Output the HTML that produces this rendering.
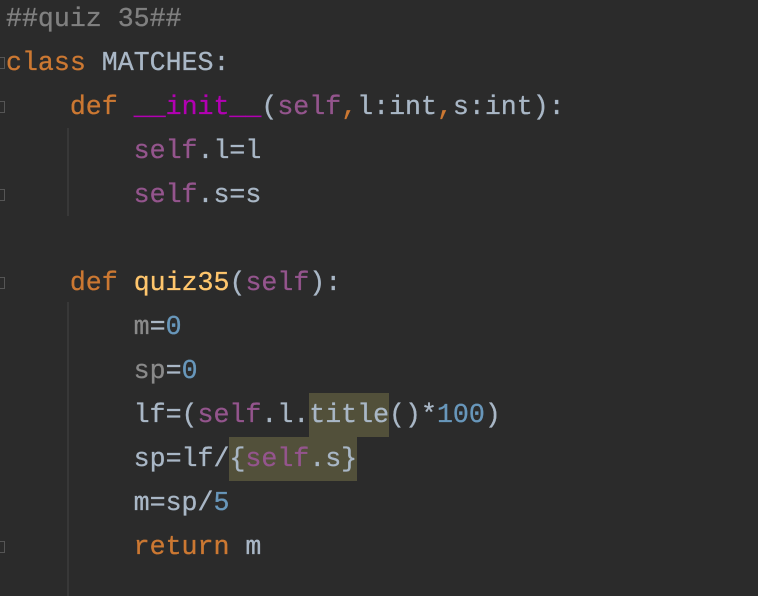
<!DOCTYPE html>
<html><head><style>
html,body{margin:0;padding:0;background:#2b2b2b;width:758px;height:596px;overflow:hidden}
.c{position:absolute;left:6px;top:-3px;font-family:"Liberation Mono",monospace;font-size:26.6px;line-height:44px;color:#a9b7c6;white-space:pre;-webkit-text-stroke:0.3px}
.k{color:#cc7832}.s{color:#94558d}.m{color:#b200b2}.n{color:#6897bb}.g{color:#808080}.u{color:#8a8a8a}.f{color:#ffc66d}
.h{background:#52503a;display:inline-block;height:44px;vertical-align:top}
.ig{position:absolute;left:67px;width:2px;background:#383838}
.fm{position:absolute;left:0;width:5px;height:12px;border:1px solid #555;border-left:none;box-sizing:border-box}
</style></head><body>
<div class="ig" style="top:128px;height:88px"></div>
<div class="ig" style="top:302px;height:294px"></div>
<div class="fm" style="top:57px"></div>
<div class="fm" style="top:101px"></div>
<div class="fm" style="top:189px"></div>
<div class="fm" style="top:277px"></div>
<div class="fm" style="top:541px"></div>
<div class="c"><span class="g">##quiz 35##</span>
<span class="k">class</span> MATCHES:
    <span class="k">def</span> <span class="m">__init__</span>(<span class="s">self</span><span class="k">,</span>l:int<span class="k">,</span>s:int):
        <span class="s">self</span>.l=l
        <span class="s">self</span>.s=s

    <span class="k">def</span> <span class="f">quiz35</span>(<span class="s">self</span>):
        <span class="u">m</span>=<span class="n">0</span>
        <span class="u">sp</span>=<span class="n">0</span>
        lf=(<span class="s">self</span>.l.<span class="h">title</span>()*<span class="n">100</span>)
        sp=lf/<span class="h">{<span class="s">self</span>.s}</span>
        m=sp/<span class="n">5</span>
        <span class="k">return</span> m</div>
</body></html>
